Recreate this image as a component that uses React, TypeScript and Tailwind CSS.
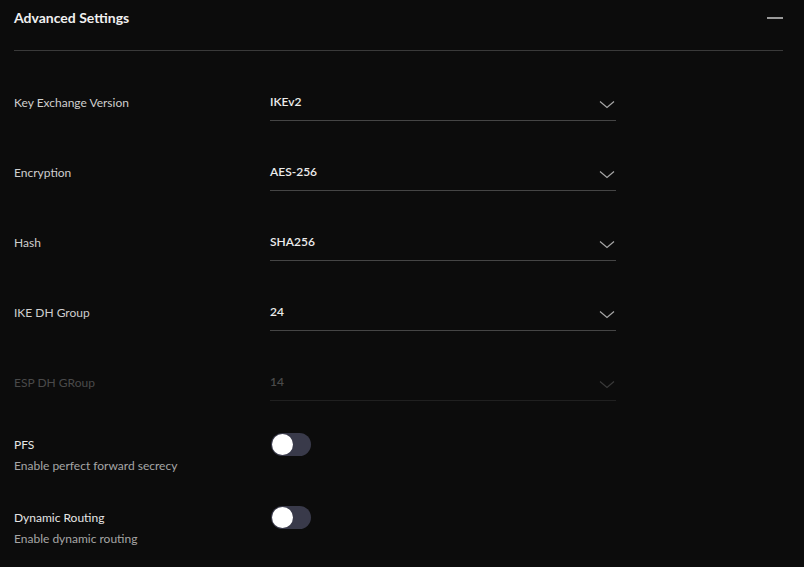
import React from 'react'

interface SelectRowProps {
  label: string
  value: string
  disabled?: boolean
}

const Chevron: React.FC<{ className: string }> = ({ className }) => (
  <svg width="16" height="9" viewBox="0 0 16 9" fill="none" className={className}>
    <path d="M1 1.5 L8 7.5 L15 1.5" stroke="currentColor" strokeWidth="1.2" />
  </svg>
)

const SelectRow: React.FC<SelectRowProps> = ({ label, value, disabled }) => (
  <div className="flex items-center">
    <div className={`w-[256px] text-xs mb-[3px] ${disabled ? 'text-[#4a4a4a]' : 'text-[#cfcfcf]'}`}>{label}</div>
    <div
      className={`w-[346px] h-[34px] pb-[3px] flex items-center justify-between border-b ${
        disabled ? 'border-[#202020]' : 'border-[#454545]'
      }`}
    >
      <span className={`text-xs font-semibold ${disabled ? 'text-[#4a4a4a]' : 'text-[#ececec]'}`}>{value}</span>
      <Chevron className={`mr-[1px] mt-[5px] ${disabled ? 'text-[#3a3a3a]' : 'text-[#a8a8a8]'}`} />
    </div>
  </div>
)

const ToggleRow: React.FC<{ label: string; description: string }> = ({ label, description }) => (
  <div className="flex items-start">
    <div className="w-[256px]">
      <div className="text-xs leading-[23px] text-[#e6e6e6]">{label}</div>
      <div className="text-xs leading-4 mt-0.5 text-[#a6a6a6]">{description}</div>
    </div>
    <button className="w-[40px] h-[23px] rounded-full bg-[#393a4a] flex items-center px-[1px] ml-[1px]">
      <span className="w-[21px] h-[21px] rounded-full bg-white" />
    </button>
  </div>
)

export default function App() {
  const rows = [
    { label: 'Key Exchange Version', value: 'IKEv2' },
    { label: 'Encryption', value: 'AES-256' },
    { label: 'Hash', value: 'SHA256' },
    { label: 'IKE DH Group', value: '24' },
    { label: 'ESP DH GRoup', value: '14', disabled: true }
  ]

  return (
    <div
      className="min-h-[567px] w-[804px] bg-[#0c0c0c] pl-[14px] pr-[21px]"
      style={{ fontFamily: 'Lato, "Open Sans", sans-serif' }}
    >
      <div className="h-[51px] border-b border-[#3a3a3a] flex items-start justify-between pt-[8px]">
        <h2 className="text-sm font-bold text-[#f0f0f0] leading-5">Advanced Settings</h2>
        <span className="mt-[9px] w-[16px] h-[2px] bg-[#9a9a9a]" />
      </div>

      <div className="pt-9 flex flex-col gap-9">
        {rows.map((row) => (
          <SelectRow key={row.label} label={row.label} value={row.value} disabled={row.disabled} />
        ))}
      </div>

      <div className="mt-8 flex flex-col gap-8">
        <ToggleRow label="PFS" description="Enable perfect forward secrecy" />
        <ToggleRow label="Dynamic Routing" description="Enable dynamic routing" />
      </div>
    </div>
  )
}
